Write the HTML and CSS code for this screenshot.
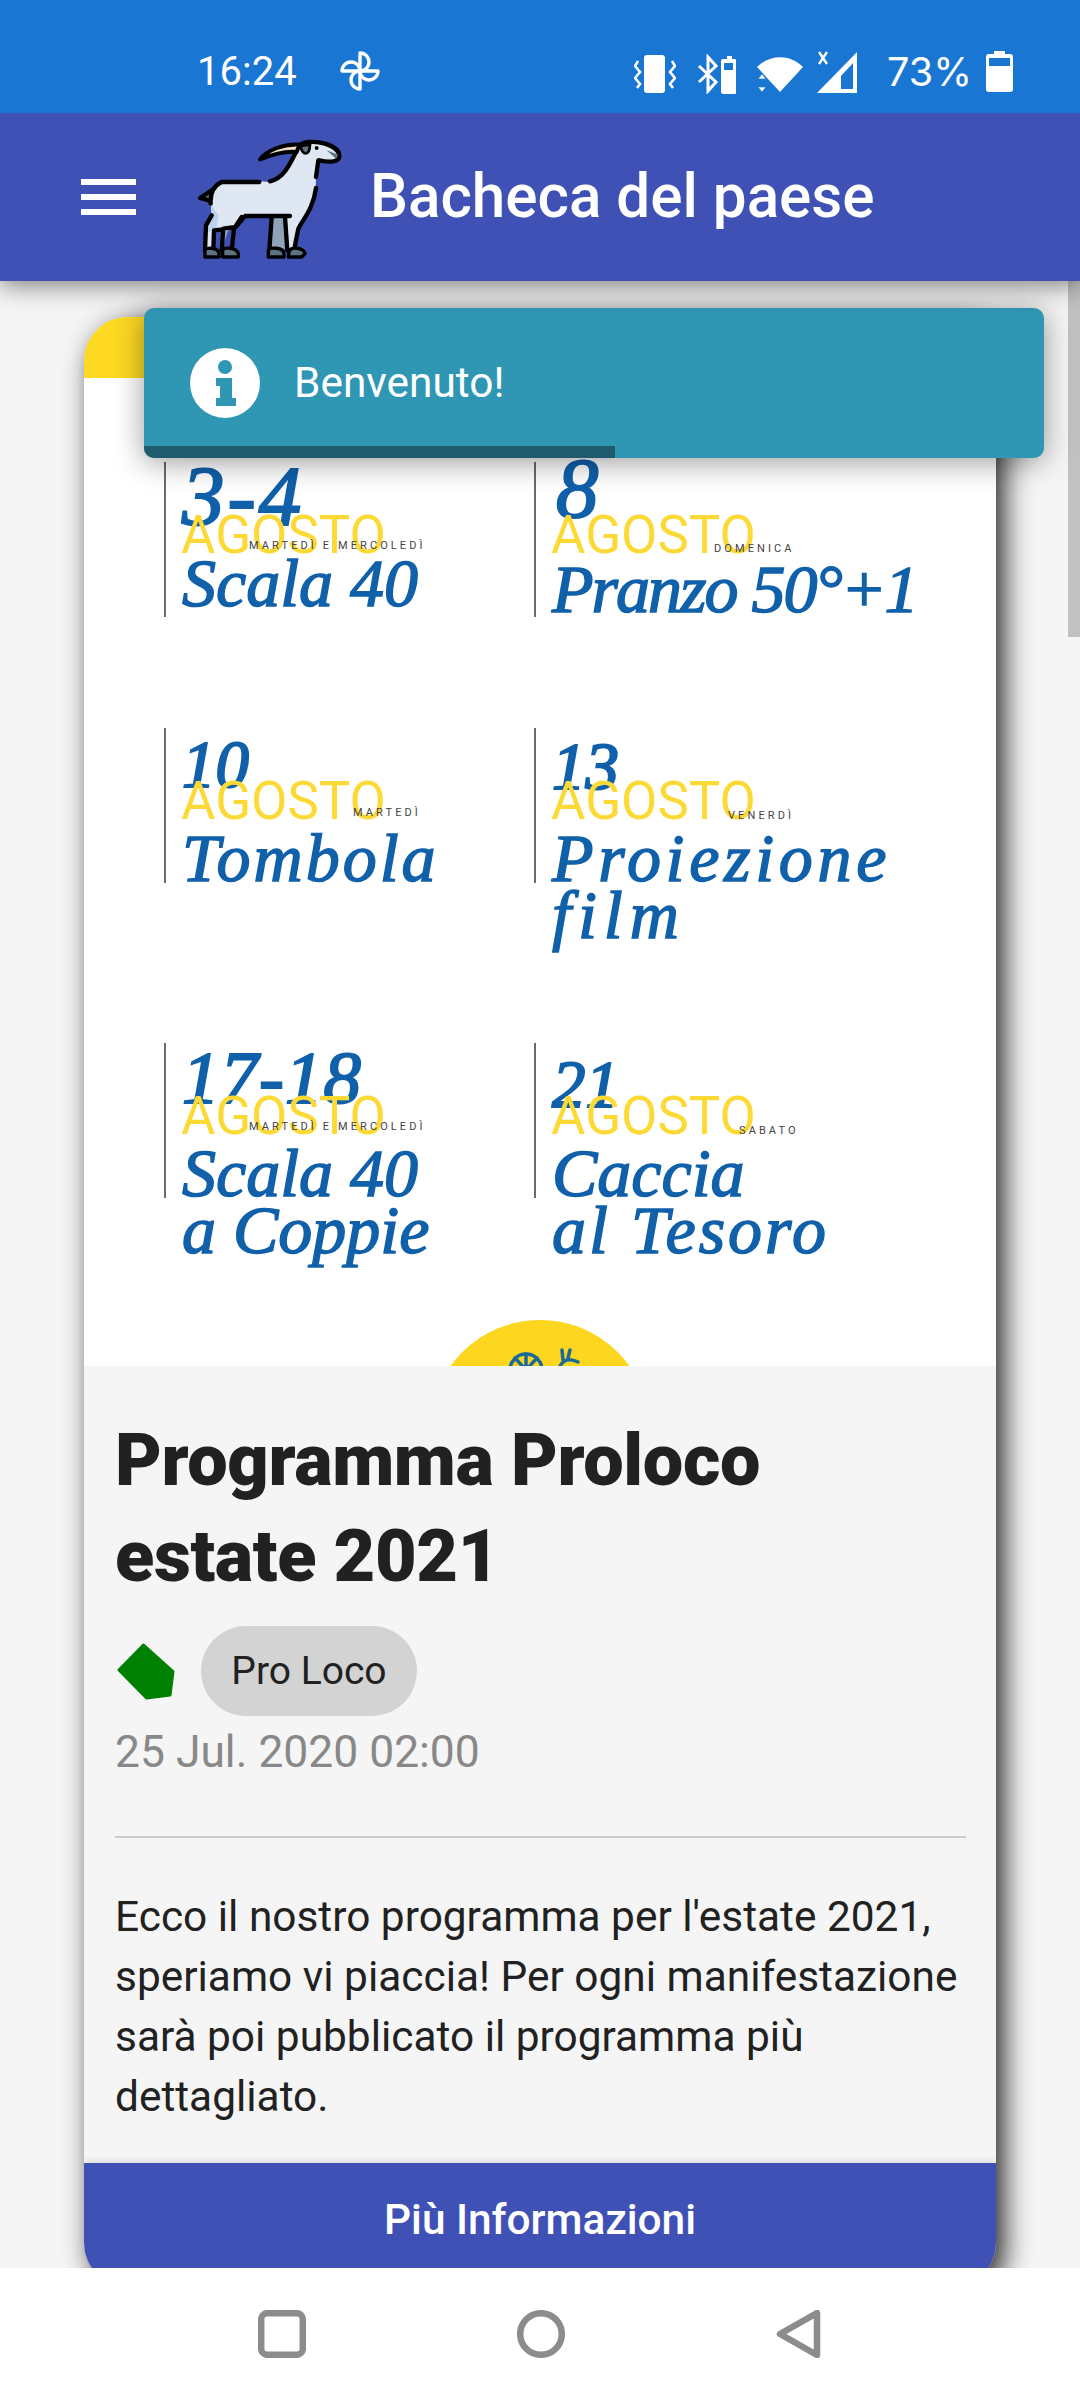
FILE: index.html
```html
<!DOCTYPE html>
<html lang="it">
<head>
<meta charset="utf-8">
<title>Bacheca del paese</title>
<link rel="stylesheet" href="styles.css">
</head>
<body>
<header class="status">
  <div class="status-left">
    <span class="clock">16:24</span>
    <svg class="fan" viewBox="0 0 42 42" fill="none" stroke="#fff" stroke-width="3.400" stroke-linejoin="round">
      <path d="M21 20V2A9 9 0 0 1 21 20Z"/>
      <path d="M21 20H39A9 9 0 0 1 21 20Z"/>
      <path d="M21 20V38A9 9 0 0 1 21 20Z"/>
      <path d="M21 20H3A9 9 0 0 1 21 20Z"/>
    </svg>
  </div>
  <div class="status-right">
    <svg class="st-vib" viewBox="0 0 42 38" fill="#fff">
      <rect x="10" y="0" width="21" height="38" rx="3"/>
      <path d="M4 6 1 11l5 6-5 6 5 6-3 4M38 6l3 5-5 6 5 6-5 6 3 4" fill="none" stroke="#fff" stroke-width="2.600"/>
    </svg>
    <svg class="st-bt" viewBox="0 0 40 40" fill="#fff">
      <path d="M2 12 19 28l-8 9V3l8 9L2 28" fill="none" stroke="#fff" stroke-width="3"/>
      <path d="M26 5h4V2h5v3h3a1 1 0 0 1 1 1v33a1 1 0 0 1-1 1H26a2 2 0 0 1-2-2V7a2 2 0 0 1 2-2Z"/>
      <rect x="27" y="9" width="9" height="7" fill="#1976d2"/>
    </svg>
    <svg class="st-wifi" viewBox="0 0 46 38" fill="#fff">
      <path d="M0 13C13 0 33 0 46 13L23 38Z"/>
      <path d="M5 20 9 25H1ZM5 38 1 33H9Z" stroke="#1976d2" stroke-width=".6"/>
    </svg>
    <svg class="st-signal" viewBox="0 0 41 42" fill="#fff">
      <path fill-rule="evenodd" d="M40 1V42H0ZM36 12 24 25V38H36Z"/>
      <path d="M2 1 10 13M10 1 2 13" stroke="#fff" stroke-width="2.400"/>
    </svg>
    <span class="pct">73%</span>
    <svg class="st-bat" viewBox="0 0 27 41" fill="#fff">
      <path d="M8 0h11v3h5a3 3 0 0 1 3 3v32a3 3 0 0 1-3 3H3a3 3 0 0 1-3-3V6a3 3 0 0 1 3-3h5Z"/>
      <rect x="3" y="7" width="21" height="8" fill="#1976d2"/>
    </svg>
  </div>
</header>

<header class="appbar">
  <div class="burger"><i></i><i></i><i></i></div>
  <svg class="goat" viewBox="0 0 600 450">
    <path d="M140 195 90 228l30 8Z" fill="#5d7480" stroke="#000" stroke-width="13" stroke-linejoin="round"/>
    <path d="M298 380 308 285H342L352 380ZM155 385 175 325 225 282 160 290Z" fill="#8fa3b8"/>
    <path d="M150 182 270 178 300 180C340 170 365 130 382 85 386 70 400 60 420 60 465 62 508 80 508 102 508 120 480 122 445 115L438 170 437 200C430 260 400 290 385 320L372 385H352L345 285H225L190 320 160 330 135 325 130 385H105L108 310 125 280 122 245C115 215 130 190 150 182Z" fill="#dfe7f2"/>
    <path d="M122 245 125 280 108 310 115 330 140 320 145 280Z" fill="#bcd3ef"/>
    <path d="M122 245C120 215 130 192 155 180H268M300 178C340 170 358 130 378 90M445 115 438 165M438 198C430 260 400 290 385 320L372 385M125 280 108 310 105 385M130 385 132 325 160 322M160 320 155 385M160 320 198 315 225 282H360M305 285 298 385M345 285 352 385M185 385 192 320 215 285" fill="none" stroke="#000" stroke-width="13" stroke-linecap="round" stroke-linejoin="round"/>
    <path d="M388 70C400 60 430 55 465 65 495 75 508 85 508 102 508 120 480 122 448 115" fill="none" stroke="#000" stroke-width="13" stroke-linecap="round"/>
    <path d="M392 72C395 100 420 105 420 68Z" fill="#5d7480" stroke="#000" stroke-width="8"/>
    <path d="M470 85 505 98 498 110Z" fill="#5d7480"/>
    <path d="M270 112C290 85 340 65 388 68L380 90C340 85 300 100 270 112Z" fill="#f1dfc3" stroke="#000" stroke-width="12" stroke-linejoin="round"/>
    <circle cx="440" cy="78" r="6"/>
    <path d="M105 405V385C105 375 145 375 147 395V405ZM158 405V385C160 375 200 375 205 395V405ZM295 405V385C300 375 340 375 342 395V405ZM355 405 358 385C365 375 400 375 405 395L395 405Z" fill="#5d7480" stroke="#000" stroke-width="10" stroke-linejoin="round"/>
  </svg>
  <h1 class="app-title">Bacheca del paese</h1>
</header>

<main class="page">
  <article class="card">
    <div class="band"></div>
    <section class="poster">
      <div class="grid">
        <div class="event">
          <div class="num num-l num-34">3-4</div>
          <div class="month">AGOSTO</div>
          <div class="day day-two">MARTEDÌ E MERCOLEDÌ</div>
          <div class="name name-up">Scala 40</div>
        </div>
        <div class="event">
          <div class="num num-l num-8">8</div>
          <div class="month">AGOSTO</div>
          <div class="day day-dom">DOMENICA</div>
          <div class="name name-low"><span class="tight">Pranzo 50°+1</span></div>
        </div>
        <div class="event">
          <div class="num">10</div>
          <div class="month">AGOSTO</div>
          <div class="day day-mar">MARTEDÌ</div>
          <div class="name"><span class="wide">Tombola</span></div>
        </div>
        <div class="event">
          <div class="num num-13">13</div>
          <div class="month">AGOSTO</div>
          <div class="day day-ven">VENERDÌ</div>
          <div class="name"><span class="wider">Proiezione</span><br><span class="widest">film</span></div>
        </div>
        <div class="event">
          <div class="num num-x">17-18</div>
          <div class="month">AGOSTO</div>
          <div class="day day-two">MARTEDÌ E MERCOLEDÌ</div>
          <div class="name">Scala 40<br>a Coppie</div>
        </div>
        <div class="event">
          <div class="num num-21">21</div>
          <div class="month">AGOSTO</div>
          <div class="day day-sab">SABATO</div>
          <div class="name">Caccia<br><span class="wide">al Tesoro</span></div>
        </div>
      </div>
      <div class="sun">
        <svg class="sun-icons" viewBox="0 0 80 24" fill="none" stroke="#1b6a9a" stroke-width="3.500" stroke-linecap="round">
          <circle cx="26" cy="25" r="16"/>
          <path d="M26 9V25M15 13 26 25M37 13 26 25"/>
          <path d="M62 5 63 15M70 5 68 13M78 17C70 13 64 14 60 21"/>
        </svg>
      </div>
    </section>
    <section class="info">
      <h2 class="info-title">Programma Proloco estate 2021</h2>
      <div class="tags">
        <svg class="tag-mark" viewBox="0 0 58 58"><path d="M26.500 3 56 29.500 53 53 29.500 56 2 28Z" fill="#008000" stroke="#008000" stroke-width="3" stroke-linejoin="round"/></svg>
        <span class="chip">Pro Loco</span>
      </div>
      <div class="date">25 Jul. 2020 02:00</div>
      <hr class="rule">
      <p class="body-text">Ecco il nostro programma per l'estate 2021, speriamo vi piaccia! Per ogni manifestazione sarà poi pubblicato il programma più dettagliato.</p>
    </section>
    <a class="more">Più Informazioni</a>
  </article>
  <div class="scrollbar"></div>
  <div class="toast">
    <svg class="toast-icon" viewBox="0 0 70 70">
      <circle cx="35" cy="35" r="35" fill="#fff"/>
      <circle cx="35" cy="19" r="7" fill="#2f96b4"/>
      <path d="M26 30H42V50H46V58H26V50H30V38H26Z" fill="#2f96b4"/>
    </svg>
    <span class="toast-text">Benvenuto!</span>
    <div class="toast-bar"></div>
  </div>
</main>

<nav class="navbar">
  <svg class="nav-icon" viewBox="0 0 48 48" fill="none" stroke="#8c8c8c" stroke-width="6.500"><rect x="3.200" y="3.200" width="41.600" height="41.600" rx="6"/></svg>
  <svg class="nav-icon" viewBox="0 0 48 48" fill="none" stroke="#8c8c8c" stroke-width="6.500"><circle cx="24" cy="24" r="20.800"/></svg>
  <svg class="nav-icon" viewBox="0 0 48 48" fill="none" stroke="#8c8c8c" stroke-width="6.500" stroke-linejoin="round"><path d="M41 3V45L4 24Z"/></svg>
</nav>
</body>
</html>
```
FILE: styles.css
```css
* { box-sizing: border-box; }
html, body { margin: 0; padding: 0; }
body {
  width: 1080px;
  height: 2400px;
  overflow: hidden;
  display: flex;
  flex-direction: column;
  font-family: Roboto, "Liberation Sans", sans-serif;
  background: #f5f5f5;
  color: #212121;
}

/* status bar */
.status {
  height: 113px;
  flex: none;
  background: #1976d2;
  color: #fff;
  display: flex;
  justify-content: space-between;
  padding: 51px 67px 0 197px;
  position: relative;
  z-index: 3;
}
.status-left { display: flex; align-items: flex-start; gap: 42px; }
.clock { font-size: 40px; line-height: 42px; }
.pct { font-family: Inter, Roboto, sans-serif; font-size: 39.500px; line-height: 42px; }
.fan { width: 42px; height: 42px; }
.status-right { display: flex; align-items: flex-start; }
.st-vib { width: 42px; height: 38px; margin: 4px 0 0 0; }
.st-bt { width: 40px; height: 40px; margin: 3px 0 0 21px; }
.st-wifi { width: 46px; height: 38px; margin: 3px 0 0 20px; }
.st-signal { width: 41px; height: 42px; margin: 0 0 0 14px; }
.pct { margin-left: 29px; }
.st-bat { width: 27px; height: 41px; margin-left: 14px; }

/* app bar */
.appbar {
  height: 168px;
  flex: none;
  background: #3f51b5;
  display: flex;
  align-items: center;
  padding-left: 81px;
  position: relative;
  z-index: 2;
  box-shadow: 0 4px 24px rgba(0, 0, 0, 0.5);
}
.burger { width: 55px; display: flex; flex-direction: column; gap: 9px; }
.burger i { display: block; height: 6px; background: #fff; }
.goat { width: 200px; height: 150px; margin-left: 34px; flex: none; }
.app-title {
  margin: 0;
  font-size: 60.200px;
  line-height: 68px;
  font-weight: 500;
  color: #fff;
  white-space: nowrap;
}

/* page */
.page {
  flex: 1;
  position: relative;
  overflow: hidden;
  padding: 36px 84px 0;
  min-height: 0;
}
.card {
  width: 912px;
  height: 1970px;
  border-radius: 44px;
  background: #f5f5f5;
  box-shadow: 8px 8px 28px rgba(0, 0, 0, 0.85);
  overflow: hidden;
  display: flex;
  flex-direction: column;
}
.band { height: 61px; flex: none; background: #fdd923; }
.poster {
  height: 988px;
  flex: none;
  background: #fff;
  position: relative;
  overflow: hidden;
  padding: 84px 0 0 80px;
}
.grid {
  display: grid;
  grid-template-columns: 370px 370px;
  grid-template-rows: 266px 315px 155px;
}
.event {
  height: 155px;
  border-left: 2px solid #6b6b6b;
  padding-left: 16px;
  position: relative;
}
.num {
  height: 50px;
  padding-top: 10px;
  font-family: "Liberation Serif", serif;
  font-style: italic;
  font-size: 67px;
  line-height: 53px;
  color: #1060aa;
  -webkit-text-stroke: 2px #1060aa;
  white-space: nowrap;
}
.num-l { font-size: 85px; }
.num-34 { padding-top: 8px; letter-spacing: 3px; }
.num-8 { padding-top: 0; margin-left: 4px; }
.num-13 { padding-top: 12px; }
.num-21 { padding-top: 15px; }
.num-x { font-size: 75px; letter-spacing: 1px; padding-top: 8px; }
.month {
  font-size: 52.800px;
  line-height: 46px;
  font-weight: 400;
  color: #fdd935;
  white-space: nowrap;
  position: relative;
  margin-left: -1px;
}
.day {
  position: absolute;
  font-size: 11px;
  line-height: 12px;
  letter-spacing: 3.100px;
  color: #444;
  white-space: nowrap;
}
.day-two { left: 83px; top: 78px; }
.day-dom { left: 178px; top: 81px; }
.day-mar { left: 187px; top: 79px; }
.day-ven { left: 192px; top: 82px; }
.day-sab { left: 203px; top: 82px; }
.name {
  font-family: "Liberation Serif", serif;
  font-style: italic;
  font-size: 68px;
  line-height: 57px;
  color: #1060aa;
  -webkit-text-stroke: 1.500px #1060aa;
  white-space: nowrap;
  margin-top: 6px;
}
.name-up { margin-top: -3px; }
.name-low { margin-top: 3px; }
.tight { letter-spacing: -2px; }
.wide { letter-spacing: 3px; }
.wider { letter-spacing: 4.700px; }
.widest { letter-spacing: 7px; }
.sun {
  position: absolute;
  left: 346px;
  top: 942px;
  width: 220px;
  height: 220px;
  border-radius: 50%;
  background: #fdd71f;
}
.sun-icons { position: absolute; left: 70px; top: 25px; width: 80px; height: 24px; overflow: visible; }

/* info */
.info {
  height: 797px;
  flex: none;
  padding: 47px 30px 0 31px;
  background: #f5f5f5;
}
.info-title {
  margin: 0;
  font-size: 72px;
  line-height: 96px;
  font-weight: 900;
  letter-spacing: -0.350px;
  color: #212121;
  width: 700px;
}
.tags { display: flex; align-items: center; gap: 26px; margin-top: 21px; }
.tag-mark { width: 58px; height: 58px; flex: none; margin-left: 2px; }
.chip {
  width: 216px;
  height: 90px;
  border-radius: 45px;
  background: #d3d3d3;
  display: flex;
  align-items: center;
  justify-content: center;
  font-size: 39px;
  color: #212121;
}
.date { font-size: 44.400px; line-height: 60px; color: #888; margin-top: 6px; }
.rule { border: 0; height: 2px; background: #ccc; margin: 54px 0 0; }
.body-text { margin: 49px 0 0; font-size: 42.400px; line-height: 60px; color: #212121; }
.more {
  height: 124px;
  flex: none;
  background: #3f51b5;
  color: #fff;
  font-size: 42.400px;
  font-weight: 500;
  line-height: 46px;
  text-align: center;
  padding-top: 34px;
  box-shadow: 0 -2px 6px rgba(0, 0, 0, 0.1);
}

/* overlays */
.scrollbar {
  position: absolute;
  right: 0;
  top: 0;
  width: 12px;
  height: 356px;
  background: #c1c1c1;
}
.toast {
  position: absolute;
  left: 144px;
  top: 27px;
  width: 900px;
  height: 150px;
  border-radius: 10px;
  background: #2f96b4;
  box-shadow: 0 4px 30px rgba(0, 0, 0, 0.4);
  display: flex;
  align-items: flex-start;
  padding: 40px 0 0 46px;
  overflow: hidden;
  color: #fff;
}
.toast-icon { width: 70px; height: 70px; flex: none; }
.toast-text { margin-left: 34px; font-size: 42.400px; line-height: 70px; }
.toast-bar { position: absolute; left: 0; bottom: 0; width: 471px; height: 12px; background: #1f5b6c; }

/* navigation */
.navbar {
  height: 132px;
  flex: none;
  background: #fff;
  position: relative;
  z-index: 1;
  display: flex;
  align-items: flex-start;
  padding: 42px 0 0 258px;
  gap: 211px;
}
.nav-icon { width: 48px; height: 48px; flex: none; }
```
